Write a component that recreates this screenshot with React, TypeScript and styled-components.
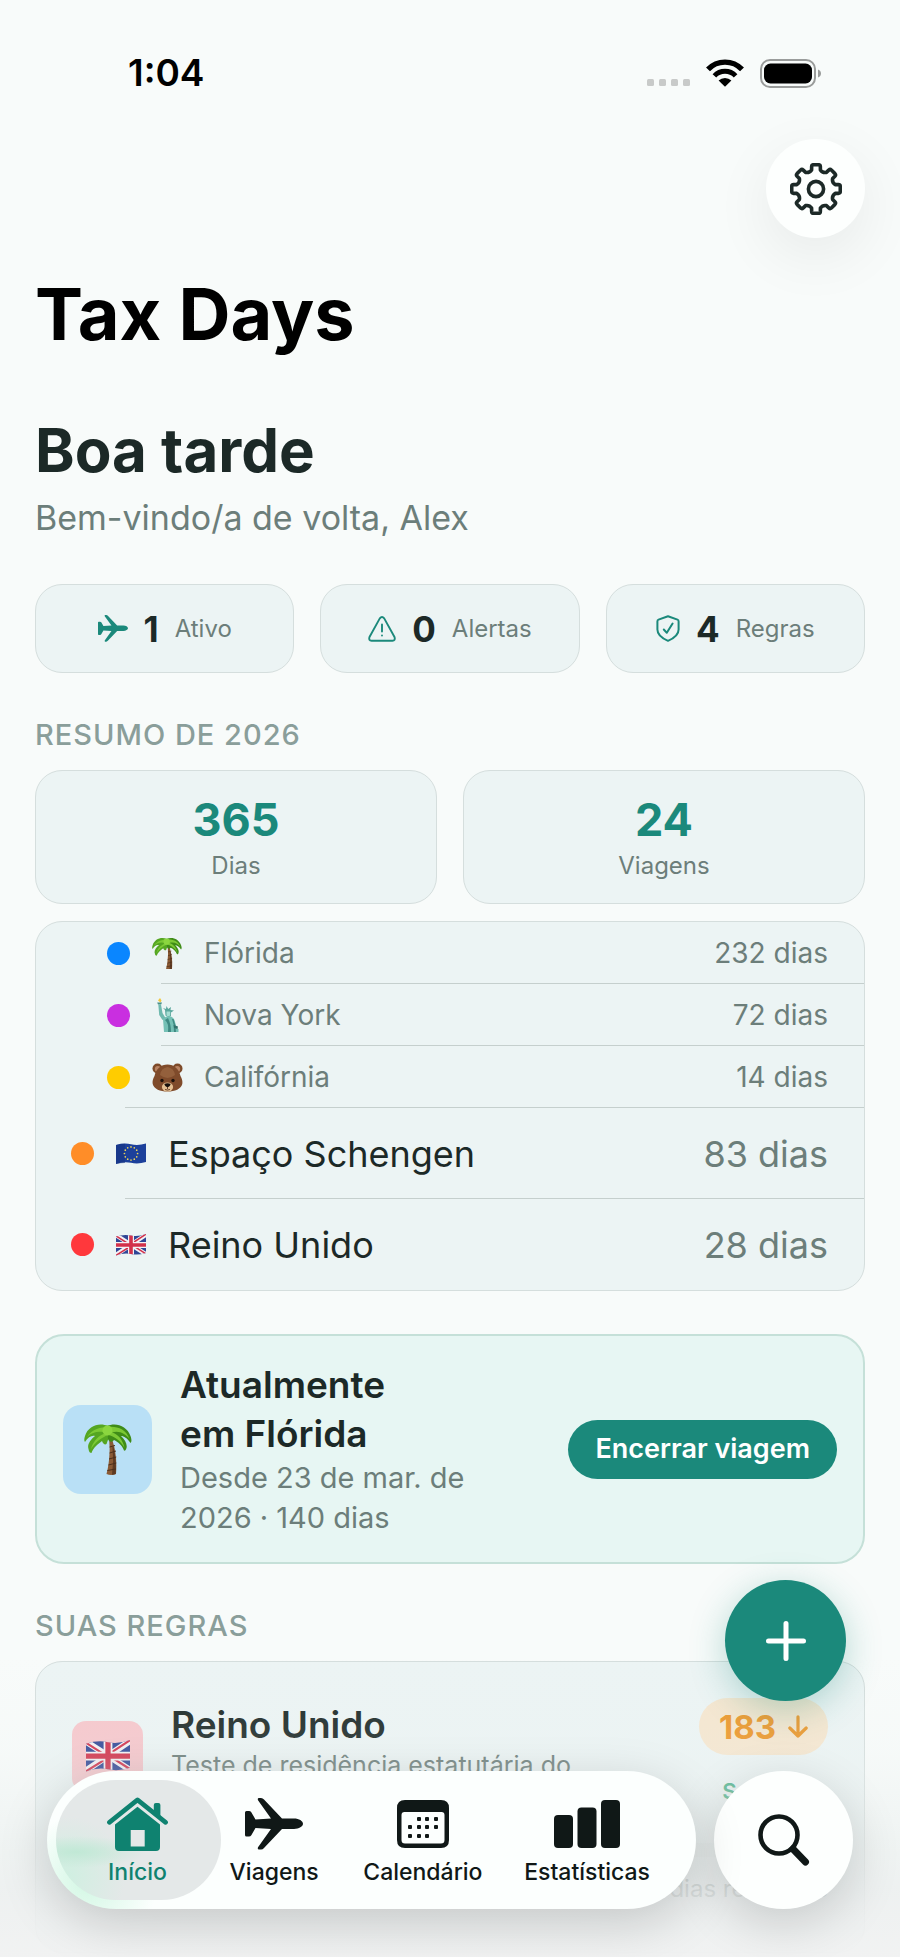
import React from "react";
import styled, { createGlobalStyle } from "styled-components";

const color = {
  page: "#f8fbfa",
  card: "#ecf4f4",
  line: "#d5dedd",
  divider: "#c5cfcd",
  ink: "#1c2927",
  muted: "#6c7e7a",
  heading: "#8a9e9a",
  teal: "#1b897b",
  tab: "#101817",
};

const GlobalStyle = createGlobalStyle`
  * { box-sizing: border-box; }
  html, body { margin: 0; background: ${color.page}; }
  body { font-family: Inter, "Liberation Sans", sans-serif; color: ${color.ink}; }
  h1, h2, h3, p, ul { margin: 0; padding: 0; }
  button { font: inherit; border: 0; padding: 0; cursor: pointer; }
`;

const Screen = styled.div`
  position: relative;
  height: 100vh;
  overflow: hidden;
  background: ${color.page};
`;

const Scroller = styled.div`
  height: 100%;
  overflow-y: auto;
  scrollbar-width: none;
`;

const StatusBar = styled.header`
  display: flex;
  align-items: center;
  justify-content: space-between;
  padding: 50px 78px 0 128px;
  height: 96px;
`;

const Clock = styled.time`
  font-size: 37px;
  line-height: 46px;
  font-weight: 600;
  color: #000;
`;

const StatusIcons = styled.div`
  display: flex;
  align-items: center;
  gap: 16px;
`;

const Main = styled.main`
  padding: 43px 35px 0;
`;

const Toolbar = styled.div`
  display: flex;
  justify-content: flex-end;
`;

const RoundButton = styled.button`
  display: grid;
  place-items: center;
  width: 99px;
  height: 99px;
  border-radius: 50%;
  background: #fdfffe;
  color: ${color.ink};
  box-shadow: 0 18px 60px rgba(0, 0, 0, 0.07);
`;

const AppTitle = styled.h1`
  margin-top: 31px;
  font-size: 72px;
  line-height: 90px;
  font-weight: 700;
  color: #000;
`;

const Greeting = styled.h2`
  margin-top: 54px;
  font-size: 60px;
  line-height: 74px;
  font-weight: 700;
`;

const Welcome = styled.p`
  margin-top: 9px;
  font-size: 34px;
  line-height: 44px;
  color: ${color.muted};
`;

const Card = styled.div`
  border: 1px solid ${color.line};
  border-radius: 27px;
  background: ${color.card};
`;

const StatRow = styled.div`
  display: grid;
  grid-template-columns: repeat(3, 1fr);
  gap: 26px;
  margin-top: 44px;
`;

const StatCard = styled(Card)`
  display: flex;
  align-items: center;
  justify-content: center;
  height: 89px;
  color: ${color.teal};
`;

const StatValue = styled.strong`
  margin: 0 16px;
  font-size: 35px;
  line-height: 44px;
  font-weight: 700;
  color: ${color.ink};
`;

const StatLabel = styled.span`
  font-size: 24px;
  line-height: 30px;
  color: ${color.muted};
`;

const SectionTitle = styled.h3`
  margin: 44px 0 17px;
  font-size: 29px;
  line-height: 36px;
  font-weight: 500;
  letter-spacing: 1px;
  text-transform: uppercase;
  color: ${color.heading};
`;

const TotalRow = styled.div`
  display: grid;
  grid-template-columns: repeat(2, 1fr);
  gap: 26px;
`;

const TotalCard = styled(Card)`
  display: flex;
  flex-direction: column;
  align-items: center;
  gap: 4px;
  padding: 22px 0;
`;

const TotalValue = styled.strong`
  font-size: 45px;
  line-height: 54px;
  font-weight: 700;
  color: ${color.teal};
`;

const PlaceList = styled(Card).attrs({ as: "ul" })`
  margin-top: 17px;
  list-style: none;
  overflow: hidden;
`;

const PlaceRow = styled.li<{ $nested?: boolean; $rule?: number }>`
  display: flex;
  align-items: center;
  height: ${(p) => (p.$nested ? 62 : 91)}px;
  padding: 0 36px 0 ${(p) => (p.$nested ? 71 : 35)}px;
  font-size: ${(p) => (p.$nested ? 28 : 36)}px;
  line-height: ${(p) => (p.$nested ? 36 : 46)}px;
  color: ${(p) => (p.$nested ? color.muted : color.ink)};
  background: linear-gradient(${color.divider}, ${color.divider}) right bottom /
    calc(100% - ${(p) => p.$rule ?? 0}px) ${(p) => (p.$rule ? 1 : 0)}px no-repeat;
`;

const Dot = styled.span<{ $fill: string }>`
  flex: none;
  width: 23px;
  height: 23px;
  border-radius: 50%;
  background: ${(p) => p.$fill};
`;

const Glyph = styled.span`
  display: grid;
  place-items: center;
  flex: none;
  width: 34px;
  height: 34px;
  margin: 0 20px;
`;

const Days = styled.span`
  margin-left: auto;
  color: ${color.muted};
`;

const TripBanner = styled.section`
  display: flex;
  align-items: center;
  margin-top: 43px;
  padding: 24px 26px;
  border: 2px solid #c5e0d8;
  border-radius: 29px;
  background: #e7f6f3;
`;

const Tile = styled.span<{ $size: number; $fill: string }>`
  display: grid;
  place-items: center;
  flex: none;
  width: ${(p) => p.$size}px;
  height: ${(p) => p.$size}px;
  border-radius: ${(p) => (p.$size > 80 ? 18 : 14)}px;
  background: ${(p) => p.$fill};
`;

const TripText = styled.div`
  width: 300px;
  margin: 0 auto 0 28px;
`;

const TripTitle = styled.h3`
  width: 220px;
  font-size: 37px;
  line-height: 49px;
  font-weight: 600;
`;

const TripMeta = styled.p`
  font-size: 29px;
  line-height: 40px;
  color: ${color.muted};
`;

const EndTripButton = styled.button`
  flex: none;
  height: 59px;
  padding: 0 27px;
  border-radius: 30px;
  background: ${color.teal};
  color: #fff;
  font-size: 27px;
  line-height: 32px;
  font-weight: 600;
`;

const RuleCard = styled(Card)`
  padding: 36px 36px 48px;
`;

const RuleHead = styled.div`
  display: flex;
  align-items: center;
`;

const RuleText = styled.div`
  width: 420px;
  margin: 0 auto 0 28px;
`;

const RuleTitle = styled.h3`
  font-size: 37px;
  line-height: 49px;
  font-weight: 600;
`;

const RuleName = styled.p`
  font-size: 25px;
  line-height: 32px;
  color: ${color.muted};
`;

const RuleStatus = styled.div`
  display: flex;
  flex-direction: column;
  align-items: flex-end;
  gap: 12px;
`;

const Badge = styled.span`
  display: flex;
  align-items: center;
  gap: 12px;
  height: 57px;
  padding: 0 20px;
  border-radius: 29px;
  background: #f5e6cf;
  color: #ec9629;
  font-size: 33px;
  line-height: 40px;
  font-weight: 700;
`;

const SafeLabel = styled.span`
  font-size: 22px;
  line-height: 48px;
  font-weight: 600;
  color: #3fae84;
`;

const Meter = styled.div`
  height: 14px;
  margin: 28px 0 17px;
  border-radius: 7px;
  background: linear-gradient(90deg, #8fe0ba 15%, #e6eeed 15%);
`;

const Remaining = styled.p`
  text-align: right;
  font-size: 24px;
  line-height: 30px;
  color: ${color.muted};
`;

const BottomFade = styled.div`
  position: absolute;
  inset: auto 0 0;
  height: 300px;
  pointer-events: none;
  background: linear-gradient(
    rgba(246, 249, 248, 0) 0%,
    rgba(234, 240, 239, 0.14) 32%,
    rgba(234, 239, 238, 0.62) 62%,
    rgba(236, 239, 239, 0.86) 78%,
    rgba(241, 242, 242, 0.97) 100%
  );
`;

const AddButton = styled(RoundButton)`
  position: absolute;
  right: 54px;
  bottom: 256px;
  width: 121px;
  height: 121px;
  background: ${color.teal};
  color: #fff;
  box-shadow: 0 8px 36px rgba(27, 137, 123, 0.3);
`;

const Dock = styled.div`
  position: absolute;
  inset: auto 47px 48px;
  display: flex;
  gap: 18px;
`;

const TabBar = styled.nav`
  position: relative;
  z-index: 0;
  flex: 1;
  display: flex;
  justify-content: space-between;
  height: 138px;
  padding: 0 26px 0 23px;
  border-radius: 69px;
  background: radial-gradient(circle at 40px 112px, #d3f7e4 0, rgba(211, 247, 228, 0) 70px), #fcfffe;
  box-shadow: 0 14px 50px rgba(0, 0, 0, 0.17);
`;

const Tab = styled.a<{ $active?: boolean }>`
  position: relative;
  display: flex;
  flex-direction: column;
  align-items: center;
  justify-content: space-between;
  min-width: 135px;
  padding: 25px 20px 23px;
  font-size: 23px;
  line-height: 28px;
  font-weight: 500;
  text-decoration: none;
  color: ${(p) => (p.$active ? "#0f8270" : color.tab)};

  &::before {
    content: ${(p) => (p.$active ? '""' : "none")};
    position: absolute;
    z-index: -1;
    inset: 9px -16px 9px -14px;
    border-radius: 60px;
    background:
      radial-gradient(ellipse 70px 16px at 20px 72px, rgba(190, 232, 212, 0.9), rgba(190, 232, 212, 0)),
      radial-gradient(circle at 10px 96px, rgba(205, 240, 224, 0.9), rgba(205, 240, 224, 0) 60px),
      #e4e8e8;
  }
`;

const TabIcon = styled.span`
  display: grid;
  place-items: center;
  height: 56px;
`;

const SearchButton = styled(RoundButton)`
  flex: none;
  width: 139px;
  height: 138px;
  color: ${color.tab};
  box-shadow: 0 14px 50px rgba(0, 0, 0, 0.16);
`;

/* ---------- icons ---------- */

const SignalDots = () => (
  <svg width="43" height="27" viewBox="0 0 43 27" fill="#c8cac9" aria-hidden="true">
    {[0, 12, 24, 36].map((x) => (
      <rect key={x} x={x} y="19" width="7" height="7" rx="1.5" />
    ))}
  </svg>
);

const Wifi = () => (
  <svg width="38" height="28" viewBox="0 0 38 27" aria-hidden="true">
    <g fill="none" stroke="#000">
      <path d="M2 9.9A23.4 23.4 0 0 1 36 9.9" strokeWidth="5.4" />
      <path d="M8.4 16.4A14.6 14.6 0 0 1 29.6 16.4" strokeWidth="5" />
    </g>
    <path d="M19 27.3L12.6 21A9.3 9.3 0 0 1 25.4 21Z" />
  </svg>
);

const Battery = () => (
  <svg width="62" height="29" viewBox="0 0 62 29" aria-hidden="true">
    <rect x="1" y="1" width="54" height="27" rx="9" fill="none" stroke="#9a9c9b" strokeWidth="2" />
    <rect x="4" y="4.5" width="48" height="20" rx="6.5" />
    <path d="M58 10.5c4 1.2 4 6.8 0 8z" fill="#9a9c9b" />
  </svg>
);

const gearOutline = (() => {
  const point = (radius: number, degrees: number) => {
    const a = (degrees * Math.PI) / 180;
    return `${(26 + radius * Math.sin(a)).toFixed(2)} ${(26 - radius * Math.cos(a)).toFixed(2)}`;
  };
  let d = "";
  for (let i = 0; i < 8; i += 1) {
    const t = i * 45;
    d += `${i ? "L" : "M"}${point(19.6, t - 13)}L${point(22.8, t - 11)}Q${point(24.6, t - 10)} ${point(24.4, t - 6)}`;
    d += `L${point(24.4, t + 6)}Q${point(24.6, t + 10)} ${point(22.8, t + 11)}L${point(19.6, t + 13)}`;
    d += `Q${point(17.2, t + 22.5)} ${point(19.6, t + 32)}`;
  }
  return `${d}Z`;
})();

const Gear = () => (
  <svg width="52" height="52" viewBox="0 0 52 52" fill="none" stroke="currentColor" strokeWidth="3.6" strokeLinejoin="round" aria-hidden="true">
    <path d={gearOutline} />
    <circle cx="26" cy="26" r="7.6" />
  </svg>
);

const Plane = ({ width }: { width: number }) => (
  <svg width={width} viewBox="0 0 58 52" fill="currentColor" aria-hidden="true">
    <path d="M0 14.5Q0 13 1.5 13H4Q5.5 13 6.3 14.2L10.5 21.5L26 20.5L13 2.2Q12.2 0 14 0H16Q17.8 0 19 1.5L37 20.5H49C54 20.5 58 23 58 25.8C58 28.5 54 31 49 31H37L19 50Q17.8 51.5 16 51.5H14Q12.2 51.5 13 49.3L26 31L10.5 30L6.3 37.3Q5.5 38.5 4 38.5H1.5Q0 38.5 0 37Z" />
  </svg>
);

const Alert = () => (
  <svg width="28" height="26" viewBox="0 0 28 26" fill="none" stroke="currentColor" strokeWidth="1.9" strokeLinecap="round" strokeLinejoin="round" aria-hidden="true">
    <path d="M11.8 2.4L1.5 21Q0.4 24.6 3.6 24.8H24.4Q27.6 24.6 26.5 21L16.2 2.4Q14 -0.3 11.8 2.4Z" />
    <path d="M14 8.5V15.5M14 19.4V19.6" />
  </svg>
);

const Shield = () => (
  <svg width="24" height="27" viewBox="0 0 24 27" fill="none" stroke="currentColor" strokeWidth="2" strokeLinecap="round" strokeLinejoin="round" aria-hidden="true">
    <path d="M12 1.2L21.5 4.6Q22.6 5 22.6 6.5V14.5C22.6 20 17.5 23.5 12 25.8C6.5 23.5 1.4 20 1.4 14.5V6.5Q1.4 5 2.5 4.6Z" />
    <path d="M7.8 14.5L10.8 17.8L16.6 8.5" />
  </svg>
);

const House = () => (
  <svg width="61" height="54" viewBox="0 0 61 54" aria-hidden="true">
    <path d="M2.4 25.4L30.5 2.9L58.6 25.4" fill="none" stroke="currentColor" strokeWidth="4.6" strokeLinecap="round" strokeLinejoin="round" />
    <path d="M46.8 8Q46.8 6 48.8 6H51.4Q53.4 6 53.4 8V21L46.8 16Z" fill="currentColor" />
    <path fillRule="evenodd" fill="currentColor" d="M30.5 9.8L53 27.5V50Q53 54 49 54H12Q8 54 8 50V27.5ZM23.7 33V49.5H37.7V33Z" />
  </svg>
);

const CalendarIcon = () => (
  <svg width="52" height="48" viewBox="0 0 52 48" fill="currentColor" aria-hidden="true">
    <path fillRule="evenodd" d="M8 0H44Q52 0 52 8V40Q52 48 44 48H8Q0 48 0 40V8Q0 0 8 0ZM7.5 12Q4.5 12 4.5 15V40Q4.5 43.500 8 43.500H44Q47.5 43.500 47.5 40V15Q47.5 12 44.500 12Z" />
    {[
      [20, 17], [28, 17], [37, 17],
      [11, 25], [20, 25], [28, 25], [37, 25],
      [11, 34], [20, 34], [28, 34],
    ].map(([x, y]) => (
      <rect key={`${x}-${y}`} x={x} y={y} width="4" height="4" rx="1" />
    ))}
  </svg>
);

const Bars = () => (
  <svg width="66" height="48" viewBox="0 0 66 48" fill="currentColor" aria-hidden="true">
    <rect x="0" y="15" width="19" height="33" rx="4" />
    <rect x="23.5" y="7.5" width="19" height="40.5" rx="4" />
    <rect x="47" y="0" width="19" height="48" rx="4" />
  </svg>
);

const Magnifier = () => (
  <svg width="52" height="52" viewBox="0 0 52 52" fill="none" stroke="currentColor" strokeLinecap="round" aria-hidden="true">
    <circle cx="21" cy="21" r="18.5" strokeWidth="4.6" />
    <path d="M35 35L47.5 48" strokeWidth="7" />
  </svg>
);

const Plus = () => (
  <svg width="40" height="40" viewBox="0 0 40 40" fill="none" stroke="currentColor" strokeWidth="5" strokeLinecap="round" aria-hidden="true">
    <path d="M20 2.5V37.5M2.5 20H37.5" />
  </svg>
);

const ArrowDown = () => (
  <svg width="20" height="23" viewBox="0 0 20 23" fill="none" stroke="currentColor" strokeWidth="3.2" strokeLinecap="round" strokeLinejoin="round" aria-hidden="true">
    <path d="M10 1.8V21M1.8 13L10 21L18.2 13" />
  </svg>
);

const Palm = ({ width }: { width: number }) => (
  <svg width={width} viewBox="0 0 48 52" aria-hidden="true">
    <path d="M24.5 14Q26 20 25.5 30Q25 42 22.5 51Q27 53 32 51Q33 38 31 27Q29 18 27 14Z" fill="#8a5a35" />
    <path d="M29.5 24Q32.5 38 31.8 51Q29.5 52 28 51.8Q30 38 28.5 24Z" fill="#5d3a22" />
    <path d="M25.6 24L31 22.5M25.6 30L32 28M25 36L32.3 34M24.4 42L32.3 40M23.3 47.5L32 46" stroke="#4c2f1b" strokeWidth="1" />
    <path d="M24 3C15 -1 4 3 1 13C0 16 0 18 1 19C4 14 8 12 11 13C6 17 3 22 4.5 26C5 29 6 30 7.5 30C9 25 14 21 18 18C19 21 21 22 22.5 21L25 14Z" fill="#55a622" />
    <path d="M23 3C32 -1 43 3 46.5 13C48 17 47.5 19 46.5 20C43 15 40 13 37 13C41 17 43.5 21 42.5 25C42 27 41 28 40 27.5C38 22 34 19 30 17C28 20 25 19 24 16Z" fill="#3f8c18" />
    <path d="M24 4C17 4 8 6 3 14C9 8 17 8 22 10C15 12 9 18 7 26C12 18 19 14 24 12C30 13 37 18 40.5 25C39 17 34 11 28 9.5C35 7 42 11 45.5 16C42 6 33 3 24 4Z" fill="#7cc935" />
    <circle cx="23.5" cy="7.5" r="5" fill="#8bd63f" />
  </svg>
);

const Liberty = () => (
  <svg width="23" height="34" viewBox="0 0 23 34" aria-hidden="true">
    <path d="M2 2.5L4 0L5.5 2.5L4.5 4.5Z" fill="#f2c83c" />
    <path d="M1.2 4.5H6L5.2 6.5H2Z" fill="#4b8f88" />
    <path d="M2.3 6.5H5L6.5 15L9.5 20L6.5 22L3.2 17Z" fill="#6fb9ae" />
    <path d="M9 12L7 10L10 11L10.5 8L12.2 11L15 9L14.5 12L18 12.5L15 14.5V18Q12 20 9.5 17.5Z" fill="#5aa79d" />
    <path d="M10.5 13.5H14.2V17.5Q12 19 10.5 17.5Z" fill="#a5ddd3" />
    <path d="M7 21Q10 17.5 15 18.5Q18.5 20 19 24L21 30.5L22.5 31V34H8Z" fill="#74c0b5" />
    <path d="M9 22Q13 25 12 34H15Q15 26 12 20ZM16 21Q18.5 27 18 34H20Q20 27 17.5 21Z" fill="#3f8a83" />
    <path d="M17.5 27L22 28.5L21.5 31L18 30Z" fill="#32716c" />
  </svg>
);

const Bear = () => (
  <svg width="31" height="29" viewBox="0 0 31 29" aria-hidden="true">
    <circle cx="5.5" cy="5.5" r="5" fill="#7d4a29" />
    <circle cx="25.5" cy="5.5" r="5" fill="#7d4a29" />
    <circle cx="5.8" cy="6" r="3" fill="#b98362" />
    <circle cx="25.2" cy="6" r="3" fill="#b98362" />
    <path d="M15.5 1.5C22 1.5 27 6 28.5 13C30 16 30.8 18 30.3 21C29 26 23 28.5 15.5 28.5S2 26 0.7 21C0.2 18 1 16 2.5 13C4 6 9 1.5 15.5 1.5Z" fill="#7f4b2b" />
    <path d="M15.5 4Q22 5 23 12Q19 15 15.5 15T8 12Q9 5 15.5 4Z" fill="#94603c" />
    <ellipse cx="15.5" cy="24" rx="5.6" ry="4.6" fill="#e3bf92" />
    <circle cx="10" cy="17.5" r="1.7" fill="#1d120c" />
    <circle cx="21" cy="17.5" r="1.7" fill="#1d120c" />
    <path d="M12.3 21Q15.5 19.5 18.7 21Q18 24 15.5 24.5Q13 24 12.3 21Z" fill="#17100c" />
    <path d="M15.5 24V26M13 26.5Q15.5 27.6 18 26.5" stroke="#5b3520" strokeWidth="0.9" fill="none" />
  </svg>
);

const EuFlag = () => (
  <svg width="30" height="22" viewBox="0 0 30 22" aria-hidden="true">
    <path d="M0 2Q8 -0.5 15 1.2T30 0.5V19Q22 21.5 15 19.8T0 21Z" fill="#1c409b" />
    <path d="M0 2Q5 0.5 9 0.7V20Q4 20.2 0 21Z" fill="#14307c" opacity="0.5" />
    {Array.from({ length: 12 }, (_, i) => {
      const a = (i * Math.PI) / 6;
      return <circle key={i} cx={15 + 6.6 * Math.sin(a)} cy={10.5 - 6.6 * Math.cos(a)} r="0.85" fill="#e8d15a" />;
    })}
  </svg>
);

const UkFlag = ({ width }: { width: number }) => (
  <svg width={width} viewBox="0 0 30 22" aria-hidden="true">
    <clipPath id={`uk-${width}`}>
      <path d="M0 2.5Q8 0 15 1.5T30 0V19Q22 21.5 15 20T0 21.5Z" />
    </clipPath>
    <g clipPath={`url(#uk-${width})`}>
      <rect width="30" height="22" fill="#2f4696" />
      <path d="M-1 0.5L31 21M-1 21.5L31 0" stroke="#f3f1f4" strokeWidth="4.2" />
      <path d="M-1 1.2L15 11.5M15 10.3L31 20.5M-1 22L15 12M15 10L31 -0.5" stroke="#d2304a" strokeWidth="1.5" />
      <path d="M15 0V22M0 11H30" stroke="#f3f1f4" strokeWidth="6" />
      <path d="M15 0V22M0 11H30" stroke="#d2304a" strokeWidth="3.6" />
    </g>
  </svg>
);

/* ---------- data ---------- */

const stats = [
  { icon: <Plane width={30} />, value: 1, label: "Ativo" },
  { icon: <Alert />, value: 0, label: "Alertas" },
  { icon: <Shield />, value: 4, label: "Regras" },
];

const totals = [
  { value: 365, label: "Dias" },
  { value: 24, label: "Viagens" },
];

const places = [
  { name: "Flórida", days: 232, dot: "#0a86ff", glyph: <Palm width={30} />, nested: true, rule: 125 },
  { name: "Nova York", days: 72, dot: "#c92fe0", glyph: <Liberty />, nested: true, rule: 125 },
  { name: "Califórnia", days: 14, dot: "#ffcc00", glyph: <Bear />, nested: true, rule: 89 },
  { name: "Espaço Schengen", days: 83, dot: "#ff8d28", glyph: <EuFlag />, rule: 89 },
  { name: "Reino Unido", days: 28, dot: "#ff383c", glyph: <UkFlag width={30} /> },
];

const tabs = [
  { label: "Início", icon: <House />, active: true },
  { label: "Viagens", icon: <Plane width={58} /> },
  { label: "Calendário", icon: <CalendarIcon /> },
  { label: "Estatísticas", icon: <Bars /> },
];

export default function App() {
  return (
    <Screen>
      <GlobalStyle />
      <Scroller>
        <StatusBar>
          <Clock>1:04</Clock>
          <StatusIcons>
            <SignalDots />
            <Wifi />
            <Battery />
          </StatusIcons>
        </StatusBar>

        <Main>
          <Toolbar>
            <RoundButton type="button" aria-label="Ajustes">
              <Gear />
            </RoundButton>
          </Toolbar>
          <AppTitle>Tax Days</AppTitle>

          <Greeting>Boa tarde</Greeting>
          <Welcome>Bem-vindo/a de volta, Alex</Welcome>

          <StatRow>
            {stats.map((s) => (
              <StatCard key={s.label}>
                {s.icon}
                <StatValue>{s.value}</StatValue>
                <StatLabel>{s.label}</StatLabel>
              </StatCard>
            ))}
          </StatRow>

          <SectionTitle>Resumo de 2026</SectionTitle>
          <TotalRow>
            {totals.map((t) => (
              <TotalCard key={t.label}>
                <TotalValue>{t.value}</TotalValue>
                <StatLabel>{t.label}</StatLabel>
              </TotalCard>
            ))}
          </TotalRow>

          <PlaceList>
            {places.map((p) => (
              <PlaceRow key={p.name} $nested={p.nested} $rule={p.rule}>
                <Dot $fill={p.dot} />
                <Glyph>{p.glyph}</Glyph>
                {p.name}
                <Days>{p.days} dias</Days>
              </PlaceRow>
            ))}
          </PlaceList>

          <TripBanner>
            <Tile $size={89} $fill="#b9e0f6">
              <Palm width={48} />
            </Tile>
            <TripText>
              <TripTitle>Atualmente em Flórida</TripTitle>
              <TripMeta>Desde 23 de mar. de 2026 · 140 dias</TripMeta>
            </TripText>
            <EndTripButton type="button">Encerrar viagem</EndTripButton>
          </TripBanner>

          <SectionTitle>Suas regras</SectionTitle>
          <RuleCard>
            <RuleHead>
              <Tile $size={71} $fill="#f6c6cb">
                <UkFlag width={44} />
              </Tile>
              <RuleText>
                <RuleTitle>Reino Unido</RuleTitle>
                <RuleName>Teste de residência estatutária do Reino Unido</RuleName>
              </RuleText>
              <RuleStatus>
                <Badge>
                  183
                  <ArrowDown />
                </Badge>
                <SafeLabel>Sem risco</SafeLabel>
              </RuleStatus>
            </RuleHead>
            <Meter />
            <Remaining>155 dias restantes</Remaining>
          </RuleCard>
        </Main>
      </Scroller>

      <BottomFade />
      <AddButton type="button" aria-label="Adicionar viagem">
        <Plus />
      </AddButton>
      <Dock>
        <TabBar>
          {tabs.map((t) => (
            <Tab key={t.label} href="#" $active={t.active} aria-current={t.active ? "page" : undefined}>
              <TabIcon>{t.icon}</TabIcon>
              {t.label}
            </Tab>
          ))}
        </TabBar>
        <SearchButton type="button" aria-label="Buscar">
          <Magnifier />
        </SearchButton>
      </Dock>
    </Screen>
  );
}
